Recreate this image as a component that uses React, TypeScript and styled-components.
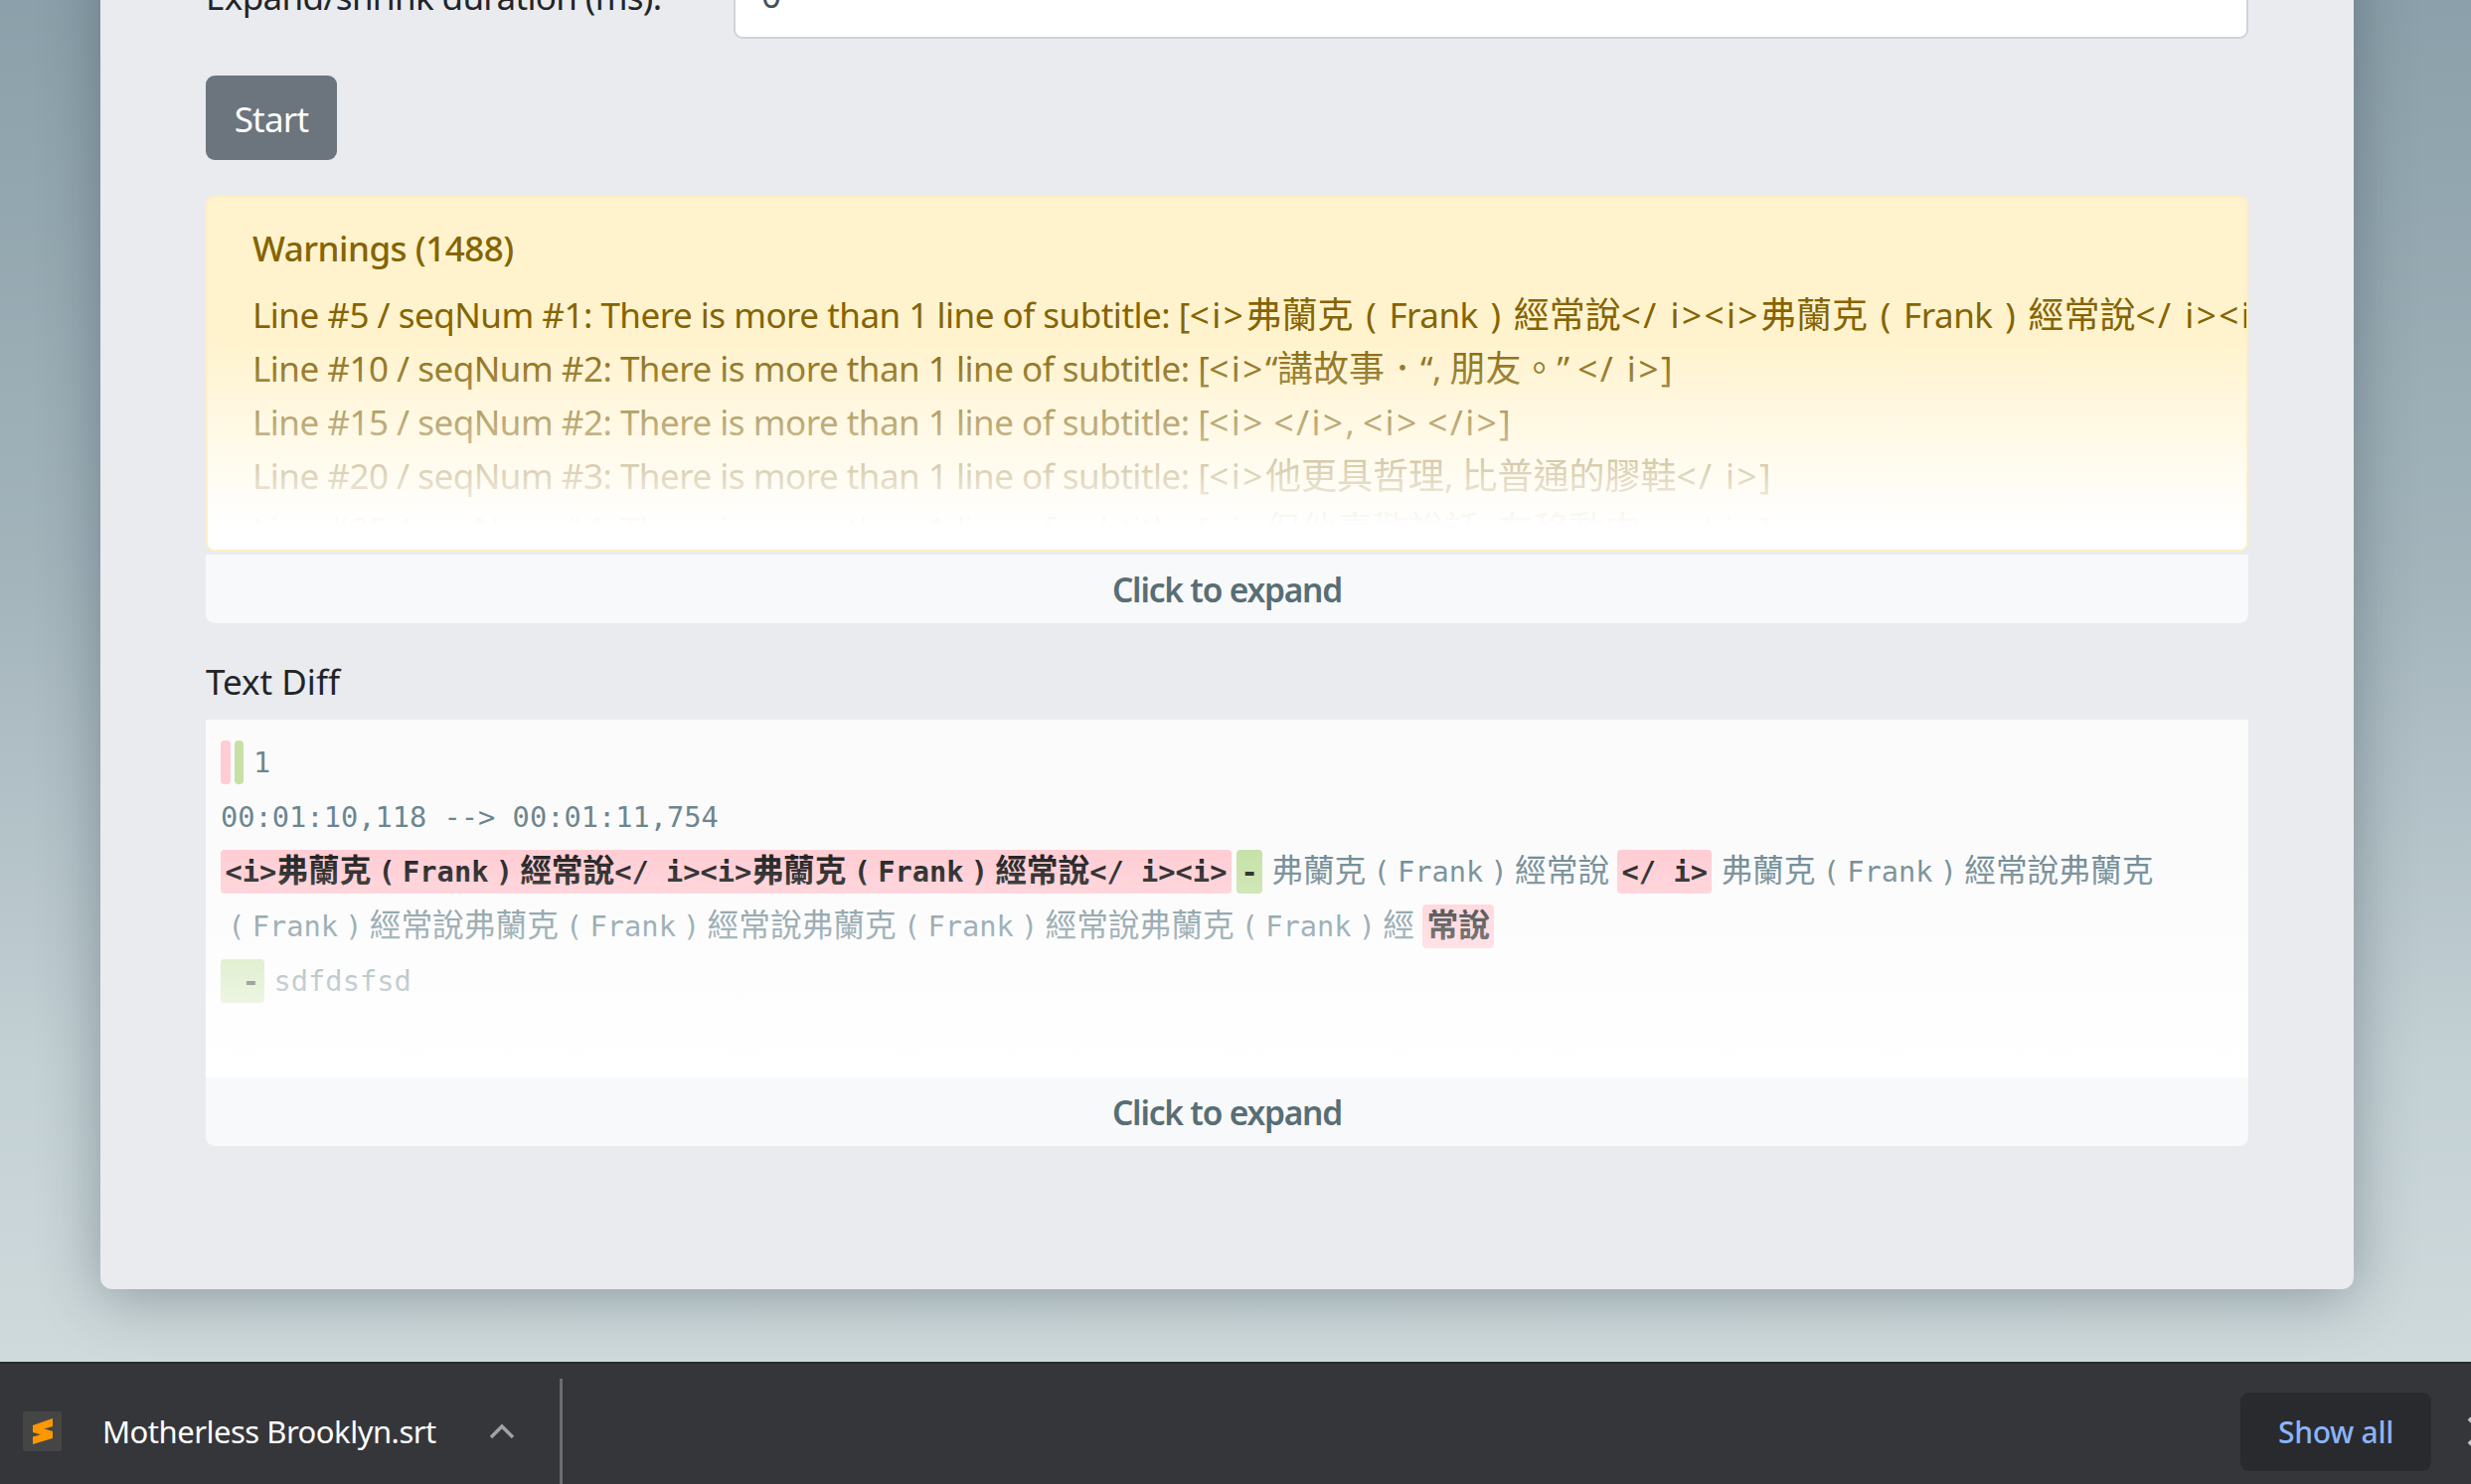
import React from "react";
import styled, { createGlobalStyle } from "styled-components";

const UI_FONT = `"Noto Sans", "Noto Sans CJK TC", sans-serif`;
const MONO_FONT = `"DejaVu Sans Mono", "Noto Sans CJK TC", monospace`;

const Global = createGlobalStyle`
  html, body { margin: 0; padding: 0; height: 100%; overflow: hidden; }
  body { font-family: ${UI_FONT}; }
  * { box-sizing: border-box; }
`;

const Screen = styled.div`
  width: 2486px;
  height: 1493px;
  display: flex;
  flex-direction: column;
  overflow: hidden;
`;

const Stage = styled.main`
  flex: 1;
  min-height: 0;
  overflow: hidden;
  display: flex;
  flex-direction: column;
  justify-content: flex-end;
  padding: 0 118px 73px 101px;
  background: linear-gradient(180deg, #8ba0aa 0%, #a3b4bb 42%, #c3d0d4 78%, #cfdadc 100%);
`;

const Panel = styled.section`
  flex-shrink: 0;
  background: #e9ebef;
  border-radius: 0 0 12px 12px;
  padding: 0 106px 144px;
  box-shadow: 0 8px 60px rgba(40, 55, 65, 0.38);
  display: flex;
  flex-direction: column;
`;

const FormRow = styled.div`
  display: flex;
  align-items: center;
  height: 85px;
`;

const Label = styled.label`
  width: 531px;
  flex-shrink: 0;
  font-size: 35px;
  line-height: 54px;
  color: #212529;
  letter-spacing: -0.65px;
`;

const NumberBox = styled.div`
  flex: 1;
  height: 85px;
  background: #fff;
  border: 2px solid #ced4da;
  border-top: none;
  border-radius: 9px;
  padding: 0 26px;
  font-size: 35px;
  line-height: 81px;
  color: #495057;
`;

const StartButton = styled.button`
  align-self: flex-start;
  margin: 37px 0 36px;
  width: 132px;
  height: 85px;
  padding: 2px 0 0;
  border: none;
  border-radius: 9px;
  background: #6c757d;
  color: #fff;
  font-family: ${UI_FONT};
  font-size: 35px;
  letter-spacing: -0.8px;
`;

const Alert = styled.div`
  position: relative;
  height: 358px;
  background: #fff3cd;
  border: 2px solid #ffefc4;
  border-radius: 9px;
  padding: 24px 0 0 45px;
  overflow: hidden;
  color: #856404;
`;

const AlertTitle = styled.div`
  font-size: 35px;
  font-weight: 500;
  line-height: 54px;
  margin-bottom: 13px;
  letter-spacing: -0.5px;
`;

const AlertLine = styled.div`
  height: 54px;
  font-size: 35px;
  line-height: 54px;
  white-space: nowrap;
  letter-spacing: -0.5px;
`;

const Fade = styled.div<{ $from: number; $to: number }>`
  position: absolute;
  inset: 0;
  background: linear-gradient(180deg, rgba(255, 255, 255, 0) ${(p) => p.$from}%, #fff ${(p) => p.$to}%);
  pointer-events: none;
`;

const ExpandBar = styled.div<{ $gap: number }>`
  margin-top: ${(p) => p.$gap}px;
  height: 69px;
  background: #f8f9fa;
  border-radius: 0 0 9px 9px;
  display: flex;
  align-items: center;
  justify-content: center;
  font-size: 33.5px;
  font-weight: 600;
  letter-spacing: -1.2px;
  color: #586e75;
`;

const Heading = styled.h2`
  margin: 32px 0 11px;
  font-size: 35px;
  font-weight: 400;
  line-height: 54px;
  color: #212529;
`;

const DiffBox = styled.div`
  position: relative;
  height: 360px;
  background: #fbfbfb;
  padding: 16px 15px 0;
  overflow: hidden;
  font-family: ${MONO_FONT};
  font-size: 28.7px;
  color: #6c8690;
`;

const DiffLine = styled.div`
  height: 55px;
  line-height: 55px;
  white-space: pre;
`;

const Del = styled.span<{ $ml?: number; $mr?: number }>`
  display: inline-block;
  height: 44px;
  line-height: 44px;
  vertical-align: middle;
  padding: 0 4.5px;
  margin-left: ${(p) => p.$ml ?? 0}px;
  margin-right: ${(p) => p.$mr ?? 0}px;
  margin-bottom: 4px;
  border-radius: 4px;
  background: #ffccd3;
  color: #1a1a1a;
  font-weight: 700;
`;

const Ins = styled(Del)`
  background: #c5e1a5;
`;

const MarkerBar = styled.span<{ $color: string; $mr: number }>`
  display: inline-block;
  vertical-align: middle;
  width: 9.5px;
  height: 44px;
  margin-right: ${(p) => p.$mr}px;
  margin-bottom: 4px;
  border-radius: 4px;
  background: ${(p) => p.$color};
`;

const Cjk = styled.span<{ $size: number }>`
  font-size: ${(p) => p.$size}px;
  line-height: 0;
  letter-spacing: 0;
  font-family: "Noto Sans CJK TC", sans-serif;
`;

const Paren = styled.span<{ $size: number }>`
  display: inline-block;
  width: ${(p) => p.$size}px;
  line-height: 0;
  text-align: center;
  letter-spacing: 0;
`;

const Tag = styled.span`
  letter-spacing: 2.5px;
`;

const DownloadBar = styled.footer`
  flex-shrink: 0;
  height: 123px;
  background: #35363a;
  border-top: 2px solid #2a2b2e;
  padding-top: 15px;
  display: flex;
  align-items: center;
  overflow: hidden;
`;

const FileIcon = styled.div`
  margin-left: 23px;
  width: 39px;
  height: 40px;
  border-radius: 2px;
  background: #454545;
  flex-shrink: 0;
`;

const FileName = styled.div`
  margin-left: 41px;
  width: 336px;
  font-size: 31px;
  letter-spacing: -0.5px;
  white-space: nowrap;
  color: #fff;
`;

const Chevron = styled.div`
  margin-left: 51px;
  width: 30px;
  display: flex;
  justify-content: center;
  color: #a0a2a6;
`;

const Divider = styled.div`
  align-self: stretch;
  width: 3px;
  margin-left: 43px;
  background: #6c6d70;
`;

const ShowAll = styled.button`
  margin-left: auto;
  width: 192px;
  height: 79px;
  padding: 0;
  border: none;
  border-radius: 9px;
  background: #292a2d;
  color: #8ab4f8;
  font-family: ${UI_FONT};
  font-size: 30px;
  font-weight: 500;
  letter-spacing: -0.3px;
`;

const CloseGlyph = styled.div`
  margin: 0 -28px 0 34px;
  width: 34px;
  height: 34px;
  flex-shrink: 0;
  color: #c4c5c7;
`;

/* Splits a string into runs so CJK, full-width brackets and tags get their own metrics. */
function runs(text: string, size: number, withTags: boolean) {
  return text
    .split(/(（|）|<\/? ?i>|[\u3000-\u9fff\uff01-\uff07\uff0a-\uffef]+)/)
    .filter(Boolean)
    .map((part, i) => {
      if (part === "（") return <Paren key={i} $size={size}>(</Paren>;
      if (part === "）") return <Paren key={i} $size={size}>)</Paren>;
      if (/^<\/? ?i>$/.test(part)) return withTags ? <Tag key={i}>{part}</Tag> : part;
      if (/[\u3000-\u9fff\uff01-\uffef]/.test(part)) return <Cjk key={i} $size={size}>{part}</Cjk>;
      return part;
    });
}

const warn = (text: string) => runs(text, 36, true);
const mono = (text: string) => runs(text, 31.7, false);

const PREFIX = "There is more than 1 line of subtitle:";
const WARNINGS = [
  `Line #5 / seqNum #1: ${PREFIX} [<i>弗蘭克（Frank）經常說</ i><i>弗蘭克（Frank）經常說</ i><i>弗蘭克（Frank）經常說</ i>]`,
  `Line #10 / seqNum #2: ${PREFIX} [<i>“講故事．“, 朋友。” </ i>]`,
  `Line #15 / seqNum #2: ${PREFIX} [<i> </i>, <i> </i>]`,
  `Line #20 / seqNum #3: ${PREFIX} [<i>他更具哲理, 比普通的膠鞋</ i>]`,
  `Line #25 / seqNum #4: ${PREFIX} [<i>但他喜歡說話, 在移動中... </ i>]`,
];

const NAME = "弗蘭克（Frank）經常說";

export default function App() {
  return (
    <Screen>
      <Global />
      <Stage>
        <Panel>
          <FormRow>
            <Label>Expand/shrink duration (ms):</Label>
            <NumberBox>0</NumberBox>
          </FormRow>
          <StartButton>Start</StartButton>
          <Alert>
            <AlertTitle>Warnings (1488)</AlertTitle>
            {WARNINGS.map((w) => (
              <AlertLine key={w}>{warn(w)}</AlertLine>
            ))}
            <Fade $from={40} $to={93} />
          </Alert>
          <ExpandBar $gap={3}>Click to expand</ExpandBar>
          <Heading>Text Diff</Heading>
          <DiffBox>
            <DiffLine>
              <MarkerBar $color="#ffccd3" $mr={4} />
              <MarkerBar $color="#c5e1a5" $mr={10} />
              {"1"}
            </DiffLine>
            <DiffLine>00:01:10,118 --&gt; 00:01:11,754</DiffLine>
            <DiffLine>
              <Del $mr={5}>{mono(`<i>${NAME}</ i><i>${NAME}</ i><i>`)}</Del>
              <Ins $mr={9}>-</Ins>
              {mono(NAME)}
              <Del $ml={8} $mr={9}>{"</ i>"}</Del>
              {mono(`${NAME}弗蘭克`)}
            </DiffLine>
            <DiffLine>
              {mono(`（Frank）經常說弗蘭克（Frank）經常說弗蘭克（Frank）經常說弗蘭克（Frank）經`)}
              <Del $ml={8}>{mono("常說")}</Del>
            </DiffLine>
            <DiffLine>
              <Ins $mr={10}>{" -"}</Ins>
              {"sdfdsfsd"}
            </DiffLine>
            <Fade $from={35} $to={100} />
          </DiffBox>
          <ExpandBar $gap={0}>Click to expand</ExpandBar>
        </Panel>
      </Stage>
      <DownloadBar>
        <FileIcon>
          <svg width="39" height="40" viewBox="0 0 39 40">
            <path d="M10 14 L30 7 L30 15 L10 21 Z M10 14 L30 20 L30 27 L10 21 Z M30 20 L30 27 L10 33 L10 25.5 Z" fill="#ff9800" />
          </svg>
        </FileIcon>
        <FileName>Motherless Brooklyn.srt</FileName>
        <Chevron>
          <svg width="26" height="16" viewBox="0 0 26 16" fill="none" stroke="currentColor" strokeWidth="3.4">
            <path d="M2 14 L13 3 L24 14" />
          </svg>
        </Chevron>
        <Divider />
        <ShowAll>Show all</ShowAll>
        <CloseGlyph>
          <svg width="34" height="34" viewBox="0 0 34 34" fill="none" stroke="currentColor" strokeWidth="4">
            <path d="M4 4 L30 30 M30 4 L4 30" />
          </svg>
        </CloseGlyph>
      </DownloadBar>
    </Screen>
  );
}
